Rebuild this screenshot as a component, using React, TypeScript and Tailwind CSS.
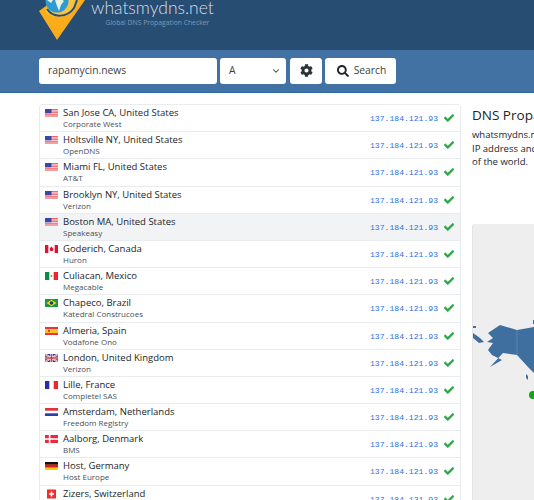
import React from 'react';
import { ChevronDown } from 'lucide-react';
import { FaCog, FaCheck, FaSearch } from 'react-icons/fa';

const ui = { fontFamily: '"Open Sans", "Noto Sans", sans-serif' };

type Flag = 'us' | 'ca' | 'mx' | 'br' | 'es' | 'gb' | 'fr' | 'nl' | 'dk' | 'de' | 'ch';

const ROWS: { city: string; isp: string; flag: Flag; hover?: boolean }[] = [
  { city: 'San Jose CA, United States', isp: 'Corporate West', flag: 'us' },
  { city: 'Holtsville NY, United States', isp: 'OpenDNS', flag: 'us' },
  { city: 'Miami FL, United States', isp: 'AT&T', flag: 'us' },
  { city: 'Brooklyn NY, United States', isp: 'Verizon', flag: 'us' },
  { city: 'Boston MA, United States', isp: 'Speakeasy', flag: 'us', hover: true },
  { city: 'Goderich, Canada', isp: 'Huron', flag: 'ca' },
  { city: 'Culiacan, Mexico', isp: 'Megacable', flag: 'mx' },
  { city: 'Chapeco, Brazil', isp: 'Katedral Construcoes', flag: 'br' },
  { city: 'Almeria, Spain', isp: 'Vodafone Ono', flag: 'es' },
  { city: 'London, United Kingdom', isp: 'Verizon', flag: 'gb' },
  { city: 'Lille, France', isp: 'Completel SAS', flag: 'fr' },
  { city: 'Amsterdam, Netherlands', isp: 'Freedom Registry', flag: 'nl' },
  { city: 'Aalborg, Denmark', isp: 'BMS', flag: 'dk' },
  { city: 'Host, Germany', isp: 'Host Europe', flag: 'de' },
  { city: 'Zizers, Switzerland', isp: 'Solnet', flag: 'ch' },
];

const FlagIcon = ({ code }: { code: Flag }) => {
  const art: Record<Flag, React.ReactNode> = {
    us: (
      <>
        <rect width="13" height="8" fill="#f0686c" />
        <rect y="1.300" width="13" height="1.300" fill="#f6d5d8" />
        <rect y="3.900" width="13" height="1.300" fill="#f6d5d8" />
        <rect y="6.500" width="13" height="1" fill="#f6d5d8" />
        <rect width="6.500" height="4.300" fill="#3c46a8" />
      </>
    ),
    ca: (
      <>
        <rect width="13" height="8" fill="#fff" />
        <rect width="3.300" height="8" fill="#e8112d" />
        <rect x="9.700" width="3.300" height="8" fill="#e8112d" />
        <path d="M6.500 1.500l.9 1.300.9-.3-.3 1.800.7.200-1.200 1.400H5.500L4.300 4.500l.7-.2-.3-1.800.9.300z" fill="#e8112d" />
      </>
    ),
    mx: (
      <>
        <rect width="13" height="8" fill="#fff" />
        <rect width="4.300" height="8" fill="#0b8a45" />
        <rect x="8.700" width="4.300" height="8" fill="#f0242f" />
        <circle cx="6.500" cy="4" r="1" fill="#9a8a50" />
      </>
    ),
    br: (
      <>
        <rect width="13" height="8" fill="#169b3c" />
        <path d="M6.500.700l5 3.300-5 3.300-5-3.300z" fill="#f5d80f" />
        <circle cx="6.500" cy="4" r="1.800" fill="#24348c" />
      </>
    ),
    es: (
      <>
        <rect width="13" height="8" fill="#e8333a" />
        <rect y="2" width="13" height="4" fill="#f7c52b" />
        <rect x="3" y="2.800" width="2" height="2.200" fill="#c9503a" />
      </>
    ),
    gb: (
      <>
        <rect width="13" height="8" fill="#2b3a9a" />
        <path d="M0 0l13 8M13 0L0 8" stroke="#fff" strokeWidth="1.600" />
        <path d="M0 0l13 8M13 0L0 8" stroke="#e0323c" strokeWidth="0.600" />
        <path d="M6.500 0v8M0 4h13" stroke="#fff" strokeWidth="2.400" />
        <path d="M6.500 0v8M0 4h13" stroke="#e0323c" strokeWidth="1.300" />
      </>
    ),
    fr: (
      <>
        <rect width="13" height="8" fill="#fff" />
        <rect width="4.300" height="8" fill="#1f30a8" />
        <rect x="8.700" width="4.300" height="8" fill="#f0242f" />
      </>
    ),
    nl: (
      <>
        <rect width="13" height="8" fill="#fff" />
        <rect width="13" height="2.700" fill="#e0303c" />
        <rect y="5.300" width="13" height="2.700" fill="#2b3fa8" />
      </>
    ),
    dk: (
      <>
        <rect width="13" height="8" fill="#ee2a3a" />
        <rect x="3.800" width="1.600" height="8" fill="#fff" />
        <rect y="3.200" width="13" height="1.600" fill="#fff" />
      </>
    ),
    de: (
      <>
        <rect width="13" height="8" fill="#f7ce00" />
        <rect width="13" height="2.700" fill="#111" />
        <rect y="2.700" width="13" height="2.700" fill="#e8112d" />
      </>
    ),
    ch: (
      <>
        <rect x="2" y="-0.500" width="9" height="9" fill="#ef2b2d" />
        <rect x="5.700" y="1.500" width="1.600" height="5" fill="#fff" />
        <rect x="4" y="3.200" width="5" height="1.600" fill="#fff" />
      </>
    ),
  };
  return (
    <svg width="13" height="8" viewBox="0 0 13 8" className="mt-[4px] shrink-0 overflow-visible">
      {art[code]}
    </svg>
  );
};

const Logo = () => (
  <svg width="60" height="45" viewBox="0 0 60 45" className="shrink-0">
    <path d="M9 11 L16 6 L20 0 L55 0 L27 40 Z" fill="#fbac1a" />
    <path d="M15 11 C21 19 35 19 43 10 L47 0 L20 0 Z" fill="#f6c343" />
    <path d="M17 9 C23 18 37 18 44 8 L47 0" fill="none" stroke="#284d73" strokeWidth="2" />
    <circle cx="27" cy="1" r="11.500" fill="#2b9ad6" />
    <path d="M25 0l6-1 3 2-3 4-2 6-2-5z" fill="#e8f1e4" />
    <path d="M17 0h6l-2 3z" fill="#e8f1e4" />
  </svg>
);

const Row = ({ city, isp, flag, hover }: { city: string; isp: string; flag: Flag; hover?: boolean }) => (
  <div className={`flex h-[27.2px] items-start border-b border-[#e9ecef] pl-[5px] pr-[6px] last:border-b-0 ${hover ? 'bg-[#f1f3f5]' : 'bg-white'}`}>
    <FlagIcon code={flag} />
    <div className="ml-[5px] min-w-0 flex-1 pt-[1px]">
      <div className="text-[9.500px] leading-[13px] text-[#212529]">{city}</div>
      <div className="text-[8px] leading-[10px] text-[#495057]">{isp}</div>
    </div>
    <span className="mt-[8px] font-['Liberation_Mono',monospace] text-[8.100px] leading-[11px] text-[#2a6fe8]">137.184.121.93</span>
    <FaCheck className="ml-[6px] mt-[8px] stroke-current stroke-[24] text-[10px] text-[#28a745]" />
  </div>
);

const WorldMap = () => (
  <div className="relative mt-[55px] h-[300px] w-[400px] rounded-[3px] border-l border-[#e4e4e4] bg-[#eeeeee]">
    <svg width="61" height="180" viewBox="0 0 61 180" className="absolute left-0 top-0">
      <path
        d="M15 109 L27 101 L44 106 L61 103 L61 149 L55 143 L44 131 L30 129 L17 143 L29 136 L19 131 L15 126 L20 119 L14 118 L20 114 Z"
        fill="#3f6f9f"
      />
      <path d="M44 106 V131" stroke="#6f94b8" strokeWidth="0.600" />
      <path d="M0 109 L7 114 L11 118 L6 119 L0 114 Z" fill="#3f6f9f" />
      <path d="M0 102h3v2h-3z" fill="#3f6f9f" />
      <path d="M60 96h1v4h-1z" fill="#3f6f9f" />
      <path d="M53 150l2 2v4l-2-2z" fill="#3f6f9f" />
      <circle cx="60" cy="171" r="4" fill="#1aa01a" />
    </svg>
  </div>
);

export default function App() {
  return (
    <div className="h-[500px] w-[534px] overflow-hidden bg-white" style={ui}>
      <header className="flex h-[50px] items-start bg-[#284d73] pl-[30px]">
        <Logo />
        <div className="ml-[1px] text-center">
          <div className="mt-[-1px] text-[17.500px] font-light leading-[18px] text-[#d5dfe9]" style={{ fontFamily: 'Lato, sans-serif' }}>whatsmydns.net</div>
          <div className="mt-[1px] pl-[10px] text-[6.800px] leading-[9px] text-[#7b9ab8]">Global DNS Propagation Checker</div>
        </div>
      </header>

      <div className="flex h-[43px] items-center border-b border-[#2b6aa3] bg-[#4272a4] pb-[1px] pl-[39px]">
        <div className="flex h-[26px] w-[178px] items-center rounded-[3px] bg-white pl-[9px] text-[10.300px] text-[#3a3f44]">rapamycin.news</div>
        <div className="ml-[3px] flex h-[26px] w-[66px] items-center justify-between rounded-[3px] bg-white pl-[9px] pr-[5px] text-[10.300px] text-[#3a3f44]">
          A
          <ChevronDown size={10} strokeWidth={2.500} />
        </div>
        <div className="ml-[4px] flex h-[26px] w-[32px] items-center justify-center rounded-[3px] bg-white text-[#2b3238]">
          <FaCog size={13} />
        </div>
        <div className="ml-[3px] flex h-[26px] w-[71px] items-center justify-center gap-[5px] rounded-[3px] bg-white pl-[2px] text-[10.300px] text-[#3a3f44]">
          <FaSearch size={12} className="text-[#212529]" />
          Search
        </div>
      </div>

      <main className="flex gap-[11px] pl-[39px] pt-[11px]">
        <div className="w-[422px] shrink-0 self-start overflow-hidden rounded-[3px] border border-[#e9ecef]">
          {ROWS.map((r, i) => (
            <Row key={i} {...r} />
          ))}
        </div>
        <div className="w-[470px] shrink-0">
          <h2 className="mt-[2px] text-[13.500px] leading-[18px] text-[#212529]">DNS Propagation Checker</h2>
          <p className="mt-[4px] text-[9.500px] leading-[13.500px] text-[#212529]">
            whatsmydns.net lets you instantly perform a DNS lookup to check a domains current
            <br />
            IP address and DNS record information against multiple nameservers located in different parts
            <br />
            of the world.
          </p>
          <WorldMap />
        </div>
      </main>
    </div>
  );
}
